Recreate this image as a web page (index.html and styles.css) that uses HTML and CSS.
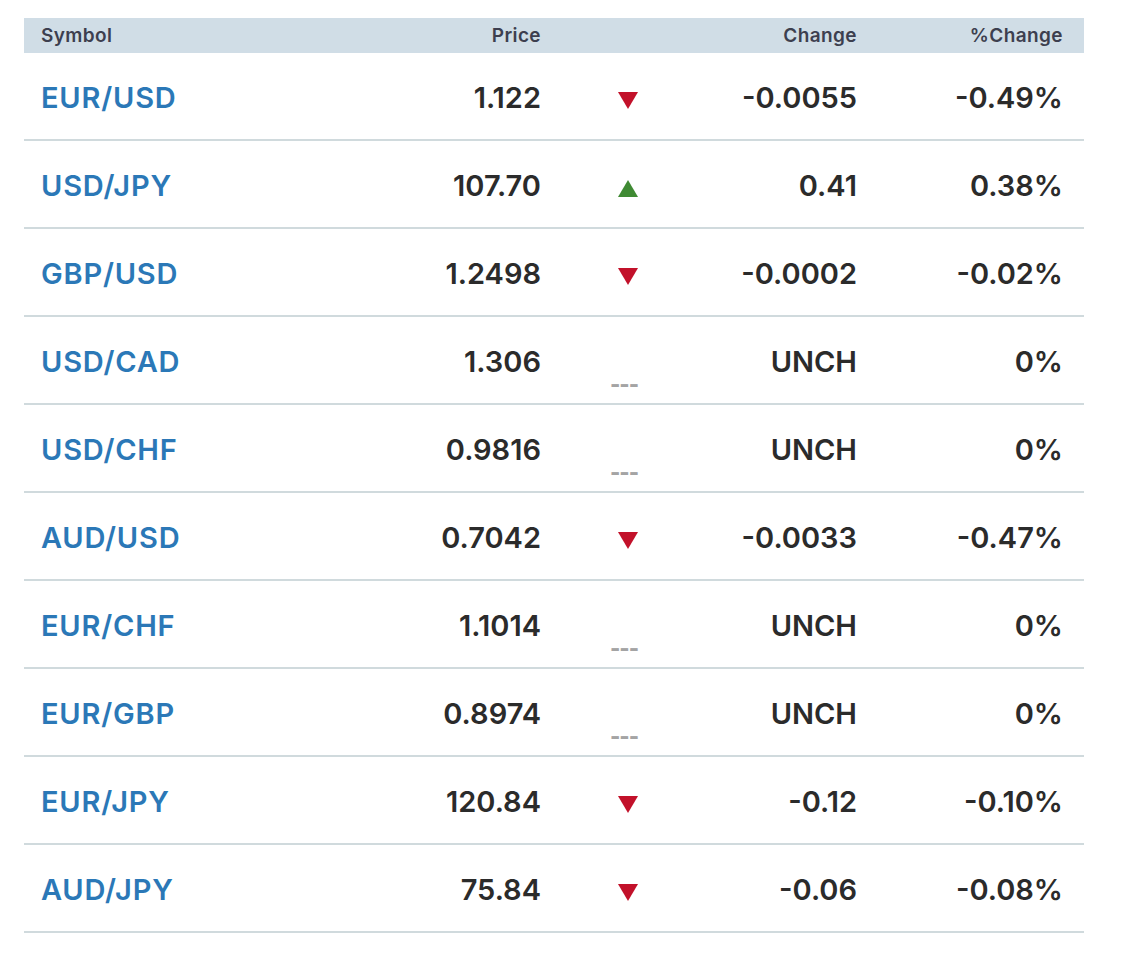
FILE: index.html
```html
<!DOCTYPE html>
<html>
<head>
<meta charset="utf-8">
<link rel="stylesheet" href="styles.css">
</head>
<body>
<div class="quotes">
  <div class="row head">
    <div class="c sym">Symbol</div>
    <div class="c num">Price</div>
    <div class="c arr"></div>
    <div class="c num">Change</div>
    <div class="c num pct">%Change</div>
  </div>
  <div class="row"><div class="c sym">EUR/USD</div><div class="c num">1.122</div><div class="c arr"><span class="tri down"></span></div><div class="c num">-0.0055</div><div class="c num pct">-0.49%</div></div>
  <div class="row"><div class="c sym">USD/JPY</div><div class="c num">107.70</div><div class="c arr"><span class="tri up"></span></div><div class="c num">0.41</div><div class="c num pct">0.38%</div></div>
  <div class="row"><div class="c sym">GBP/USD</div><div class="c num">1.2498</div><div class="c arr"><span class="tri down"></span></div><div class="c num">-0.0002</div><div class="c num pct">-0.02%</div></div>
  <div class="row"><div class="c sym">USD/CAD</div><div class="c num">1.306</div><div class="c arr"><span class="unch">---</span></div><div class="c num">UNCH</div><div class="c num pct">0%</div></div>
  <div class="row"><div class="c sym">USD/CHF</div><div class="c num">0.9816</div><div class="c arr"><span class="unch">---</span></div><div class="c num">UNCH</div><div class="c num pct">0%</div></div>
  <div class="row"><div class="c sym">AUD/USD</div><div class="c num">0.7042</div><div class="c arr"><span class="tri down"></span></div><div class="c num">-0.0033</div><div class="c num pct">-0.47%</div></div>
  <div class="row"><div class="c sym">EUR/CHF</div><div class="c num">1.1014</div><div class="c arr"><span class="unch">---</span></div><div class="c num">UNCH</div><div class="c num pct">0%</div></div>
  <div class="row"><div class="c sym">EUR/GBP</div><div class="c num">0.8974</div><div class="c arr"><span class="unch">---</span></div><div class="c num">UNCH</div><div class="c num pct">0%</div></div>
  <div class="row"><div class="c sym">EUR/JPY</div><div class="c num">120.84</div><div class="c arr"><span class="tri down"></span></div><div class="c num">-0.12</div><div class="c num pct">-0.10%</div></div>
  <div class="row"><div class="c sym">AUD/JPY</div><div class="c num">75.84</div><div class="c arr"><span class="tri down"></span></div><div class="c num">-0.06</div><div class="c num pct">-0.08%</div></div>
</div>
</body>
</html>
```
FILE: styles.css
```css
html, body {
  margin: 0;
  padding: 0;
  background: #fff;
}
body {
  padding: 18px 0 0 24px;
  font-family: "Inter", "Liberation Sans", sans-serif;
}
.quotes {
  width: 1060px;
}
.row {
  display: grid;
  grid-template-columns: 300px 217px 174px 142px 227px;
  height: 86px;
  box-sizing: content-box;
  align-items: center;
  border-bottom: 2px solid #d0dadd;
  font-size: 29px;
  font-weight: 600;
  color: #2b2b2b;
}
.row:not(.head) > .c {
  padding-top: 3px;
}
.row.head {
  height: 35px;
  background: #d0dde6;
  border-bottom: none;
  font-size: 19px;
  color: #3d3f4f;
  letter-spacing: 0.4px;
}
.c {
  white-space: nowrap;
}
.sym {
  padding-left: 17px;
}
.row:not(.head) .sym {
  color: #2b78b7;
  letter-spacing: 0.8px;
}
.num {
  text-align: right;
}
.pct {
  padding-right: 21px;
}
.arr {
  padding-left: 77px;
  height: 100%;
  display: flex;
  align-items: center;
  box-sizing: border-box;
}
.tri {
  display: block;
  width: 0;
  height: 0;
  border-left: 10px solid transparent;
  border-right: 10px solid transparent;
  margin-top: 6px;
}
.tri.down {
  border-top: 17px solid #c2112a;
}
.tri.up {
  border-bottom: 17px solid #3f8a33;
}
.unch {
  font-size: 22px;
  font-weight: 800;
  color: #a4a4a4;
  letter-spacing: -1px;
  margin-top: 44px;
  margin-left: -8px;
}
```
